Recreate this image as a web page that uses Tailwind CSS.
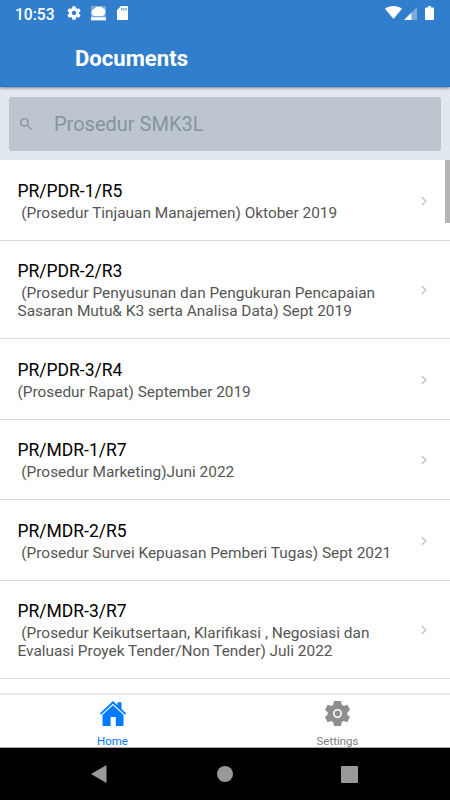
<!DOCTYPE html>
<html lang="id">
<head>
    <meta charset="UTF-8">
    <meta name="viewport" content="width=device-width, initial-scale=1.0">
    <title>Documents</title>
    <script src="https://cdn.jsdelivr.net/npm/@tailwindcss/browser@4"></script>
</head>
<body class="h-screen flex flex-col overflow-hidden bg-white font-[Roboto,sans-serif]">
    <header class="relative z-10 h-[87px] shrink-0 bg-[#307ecc] border-b border-[#2374c6] text-white shadow-[0_1px_3px_rgba(0,0,0,0.45)]">
        <!-- Status bar -->
        <div class="h-7 flex items-center pl-[15px] pr-[16px]">
            <span class="w-[52px] pt-px text-[15.6px] font-medium leading-7">10:53</span>
            <svg class="w-[14px] h-[14px] -mt-0.5" viewBox="2 2 20 20" fill="currentColor"><path d="M19.14 12.94c.04-.3.06-.61.06-.94s-.02-.64-.07-.94l2.03-1.58a.49.49 0 0 0 .12-.61l-1.92-3.32a.49.49 0 0 0-.59-.22l-2.39.96a7 7 0 0 0-1.62-.94l-.36-2.54a.48.48 0 0 0-.48-.41h-3.84a.47.47 0 0 0-.47.41l-.36 2.54c-.59.24-1.13.57-1.62.94l-2.39-.96a.47.47 0 0 0-.59.22L2.74 8.87a.47.47 0 0 0 .12.61l2.03 1.58a6 6 0 0 0 0 1.88l-2.03 1.58a.49.49 0 0 0-.12.61l1.92 3.32c.12.22.37.29.59.22l2.39-.96c.5.38 1.03.7 1.62.94l.36 2.54c.05.24.24.41.48.41h3.84c.24 0 .44-.17.47-.41l.36-2.54c.59-.24 1.13-.56 1.62-.94l2.39.96c.22.08.47 0 .59-.22l1.92-3.32a.47.47 0 0 0-.12-.61zM12 15.1a3.1 3.1 0 1 1 0-6.2 3.1 3.1 0 0 1 0 6.2z"/></svg>
            <svg class="w-[15px] h-[15px] ml-[10px] -mt-0.5" viewBox="0 0 15 15" fill="currentColor"><path fill-opacity=".35" d="M0 0h15v15H0z"/><path d="M2.500 10 .5 7.500l.5-3L3.500 2.500l2.500-2 2 .5L10 .5l1.500 1.500 2 .8 1 3-1 2.700-1.500 1.500zM0 11.300h15v2.700H0z"/></svg>
            <svg class="w-[11px] h-[14px] ml-[11px] -mt-0.5" viewBox="0 0 11 14"><path fill="currentColor" d="M4 0h6a1 1 0 0 1 1 1v12a1 1 0 0 1-1 1H1a1 1 0 0 1-1-1V4z"/><path fill="#307ecc" fill-opacity=".75" d="M4 2h1.300v2.500H4zM6.200 2h1.300v2.500H6.200zM8.400 2h1.300v2.500H8.400z"/></svg>
            <svg class="w-[17px] h-[13px] ml-auto -mt-1" viewBox="0 0 17 13" fill="currentColor"><path d="M8.500 13 0 2.800C2.300 1 5.200 0 8.500 0S14.700 1 17 2.800z"/></svg>
            <svg class="w-[13px] h-[13px] ml-0.5 -mt-px" viewBox="0 0 13 13" fill="currentColor"><path fill-opacity=".35" d="M13 0v13H7.500V5.500z"/><path d="M7.500 5.500V13H0z"/></svg>
            <svg class="w-[9px] h-[14px] ml-2 -mt-0.5" viewBox="0 0 9 14" fill="currentColor"><path d="M3 0h3v1.400h2a1 1 0 0 1 1 1V13a1 1 0 0 1-1 1H1a1 1 0 0 1-1-1V2.400a1 1 0 0 1 1-1h2z"/></svg>
        </div>
        <h1 class="pl-[75px] text-[22.1px] leading-[60px] font-bold">Documents</h1>
    </header>

    <div class="h-[73px] shrink-0 bg-[#e1e8ee] pt-[10px] px-[9px]">
        <div class="h-[54px] rounded-[3px] bg-[#bdc6cf] flex items-center text-[#86939e] pl-[11px]">
            <svg class="w-3 h-3" viewBox="3 3 17.500 17.500" fill="currentColor"><path d="M15.500 14h-.79l-.28-.27A6.470 6.470 0 0 0 16 9.500 6.500 6.500 0 1 0 9.500 16c1.610 0 3.090-.59 4.230-1.570l.27.28v.79l5 4.990L20.490 19l-4.990-5zm-6 0C7.010 14 5 11.990 5 9.500S7.010 5 9.500 5 14 7.010 14 9.500 11.990 14 9.500 14z"/></svg>
            <span class="ml-[22px] text-xl">Prosedur SMK3L</span>
        </div>
    </div>

    <main class="relative flex-1 min-h-0 overflow-hidden pt-[0.7px]">
        <ul id="list"></ul>
        <div class="absolute right-0 top-0 w-[5px] h-[63px] bg-[#b5b5b5]"></div>
    </main>

    <nav class="h-[55px] shrink-0 border-t-2 border-[#e9e9e9] border-b border-b-[#aaa] flex text-[11.5px] text-center">
        <div class="flex-1 flex flex-col items-center pt-1.5 text-[#007aff]">
            <svg class="w-[26px] h-[25px] shrink-0" viewBox="0 0 26 25" fill="currentColor"><path d="M13 0 17.500 4.200V1.200h4v6.900L26 12.200 24.900 13.700 13 2.800 1.100 13.700 0 12.200z"/><path d="M13 4.300 23.500 14v10a1 1 0 0 1-1 1H15.800v-9h-5.200v9H3.500a1 1 0 0 1-1-1V14z"/></svg>
            <span class="mt-2 leading-[14px]">Home</span>
        </div>
        <div class="flex-1 flex flex-col items-center pt-1.5 text-[#808080]">
            <svg class="w-[25px] h-[25px] shrink-0" viewBox="0 0 25 25"><path fill="#8e8e8f" d="M9 0h7l.8 3.800 2 1.100 3.700-1.200 2.500 5.300-2.600 2.500v2.300L25 16.100l-2.800 5.100-3.600-1.100-1.900 1.100L16 25H9l-.8-3.800-2-1.100-3.600 1.100L0 16.100l2.700-2.500v-2.300L0 8.900l2.700-5.100 3.600 1.100 1.900-1.100z"/><circle cx="12.500" cy="12.500" r="3.700" fill="none" stroke="#fff" stroke-width="1.600"/></svg>
            <span class="mt-2 leading-[14px]">Settings</span>
        </div>
    </nav>

    <!-- Android navigation bar -->
    <footer class="h-[52px] shrink-0 bg-black flex items-center pl-[91px] text-[#999]">
        <svg class="w-4 h-[18px]" viewBox="0 0 16 18" fill="currentColor"><path d="M15.500 0v18L0 9z"/></svg>
        <div class="w-4 h-4 rounded-full bg-[#999] ml-[110px]"></div>
        <div class="w-[17px] h-[17px] rounded-[1px] bg-[#999] ml-[108px]"></div>
    </footer>

    <script>
        const docs = [
            ['PR/PDR-1/R5', ' (Prosedur Tinjauan Manajemen) Oktober 2019'],
            ['PR/PDR-2/R3', ' (Prosedur Penyusunan dan Pengukuran Pencapaian\nSasaran Mutu& K3 serta Analisa Data) Sept 2019'],
            ['PR/PDR-3/R4', '(Prosedur Rapat) September 2019'],
            ['PR/MDR-1/R7', ' (Prosedur Marketing)Juni 2022'],
            ['PR/MDR-2/R5', ' (Prosedur Survei Kepuasan Pemberi Tugas) Sept 2021'],
            ['PR/MDR-3/R7', ' (Prosedur Keikutsertaan, Klarifikasi , Negosiasi dan\nEvaluasi Proyek Tender/Non Tender) Juli 2022'],
        ];

        document.getElementById('list').innerHTML = docs.map(([title, subtitle]) => `
            <li class="flex items-center justify-between border-b border-[#dcdcdc] pl-[17.500px] pr-[23px] pt-[19.400px] pb-[18px]">
                <div>
                    <div class="text-[17.500px] leading-[22px] text-black">${title}</div>
                    <div class="mt-[2px] text-[15.400px] leading-[18px] whitespace-pre text-[#555]">${subtitle.replace('&', '&amp;')}</div>
                </div>
                <svg class="w-[6px] h-[10px]" viewBox="0 0 6 10" fill="none" stroke="#c7c7cc" stroke-width="1.600"><path d="M.8 1 4.800 5 .8 9"/></svg>
            </li>`).join('');
    </script>
</body>
</html>
